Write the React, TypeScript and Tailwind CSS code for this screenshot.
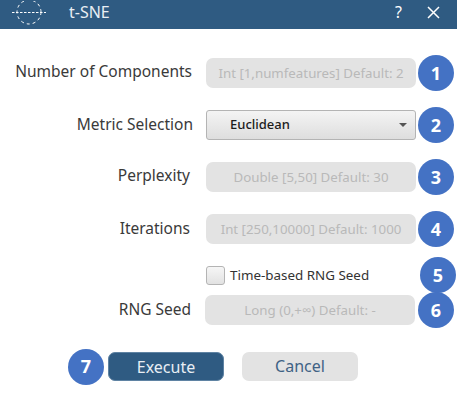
const font = { fontFamily: '"Noto Sans", "Open Sans", sans-serif' };

function Badge({ n }: { n: number }) {
  return (
    <div className="w-[36px] h-[36px] shrink-0 rounded-full bg-[#4472c4] text-white text-[18px] font-bold flex items-center justify-center">
      {n}
    </div>
  );
}

function FieldRow({ label, labelClass, placeholder, n }: { label: string; labelClass: string; placeholder: string; n: number }) {
  return (
    <div className="flex items-center h-[30px]">
      <div className={`w-[192px] text-right text-[15.5px] text-[#3a3a3a] whitespace-nowrap ${labelClass}`}>{label}</div>
      <div className="ml-[14px] w-[210px] h-[30px] pt-[1px] rounded-[7px] bg-[#e3e3e3] text-[#b9b9b9] text-[13.3px] flex items-center justify-center whitespace-nowrap">
        {placeholder}
      </div>
      <div className="ml-[2px]">
        <Badge n={n} />
      </div>
    </div>
  );
}

export default function App() {
  return (
    <div className="w-[457px] h-[403px] bg-white overflow-hidden" style={font}>
      {/* Title bar */}
      <div className="h-[29px] bg-[#2f5b82] flex items-center text-white">
        <svg width="36" height="28" viewBox="0 0 36 28" className="ml-[11px]" fill="none" stroke="#fff">
          <circle cx="18" cy="11" r="12" strokeWidth="1" strokeDasharray="3 3" />
          <path d="M1 11.5H35" strokeWidth="1.2" strokeDasharray="2.5 1.5" />
        </svg>
        <span className="ml-[22px] -mt-[5px] text-[16px] text-[#e8eef4]">t-SNE</span>
        <span className="ml-auto -mt-[5px] text-[16px]">?</span>
        <svg width="13" height="13" viewBox="0 0 13 13" className="ml-[25px] mr-[17px] -mt-[5px]" stroke="#fff" strokeWidth="1.5">
          <path d="M1 1L12 12M12 1L1 12" />
        </svg>
      </div>

      <div className="pt-[29px] flex flex-col gap-[22px]">
        <FieldRow label="Number of Components" labelClass="-mt-[2px]" placeholder="Int [1,numfeatures] Default: 2" n={1} />

        <div className="flex items-center h-[30px]">
          <div className="w-[192px] -mt-[1px] text-right text-[15.5px] text-[#3a3a3a] translate-x-[1px]">Metric Selection</div>
          <div className="ml-[14px] w-[210px] h-[30px] rounded-[3px] border border-[#b4b4b4] bg-gradient-to-b from-[#f4f4f4] to-[#dedede] flex items-center pl-[23px] pr-[8px] text-[13px] font-medium text-[#1c1c1c]">
            Euclidean
            <div className="ml-auto w-0 h-0 border-l-[4px] border-r-[4px] border-t-[4px] border-l-transparent border-r-transparent border-t-[#555]" />
          </div>
          <div className="ml-[2px]">
            <Badge n={2} />
          </div>
        </div>

        <FieldRow label="Perplexity" labelClass="-mt-[2px] pr-[2px]" placeholder="Double [5,50] Default: 30" n={3} />
        <FieldRow label="Iterations" labelClass="pr-[2px]" placeholder="Int [250,10000] Default: 1000" n={4} />

        <div className="flex items-center h-[19px]">
          <div className="ml-[206px] w-[19px] h-[19px] rounded-[3px] border border-[#b4b4b4] bg-gradient-to-b from-[#f6f6f6] to-[#e2e2e2]" />
          <span className="ml-[5px] w-[188px] text-[13.4px] text-[#333] whitespace-nowrap">Time-based RNG Seed</span>
          <div className="ml-[2px] -mt-[1px]">
            <Badge n={5} />
          </div>
        </div>

        <div className="-mt-[12px]">
          <div className="flex items-center h-[30px]">
            <div className="w-[191px] text-right text-[15.5px] text-[#3a3a3a]">RNG Seed</div>
            <div className="ml-[14px] w-[210px] h-[30px] pt-[1px] rounded-[7px] bg-[#e3e3e3] text-[#b9b9b9] text-[13.3px] flex items-center justify-center whitespace-nowrap">
              Long (0,+∞) Default: -
            </div>
            <div className="ml-[3px]">
              <Badge n={6} />
            </div>
          </div>
        </div>

        <div className="mt-[5px] flex items-center h-[29px] pl-[68px]">
          <Badge n={7} />
          <button className="ml-[4px] w-[116px] h-[29px] rounded-[7px] bg-[#2f5b82] border border-[#5f83a3] text-[#e8eef4] text-[16px]">
            Execute
          </button>
          <button className="ml-[18px] w-[116px] h-[29px] pb-[2px] rounded-[7px] bg-[#e3e3e3] text-[#3f6285] text-[16px]">
            Cancel
          </button>
        </div>
      </div>
    </div>
  );
}
